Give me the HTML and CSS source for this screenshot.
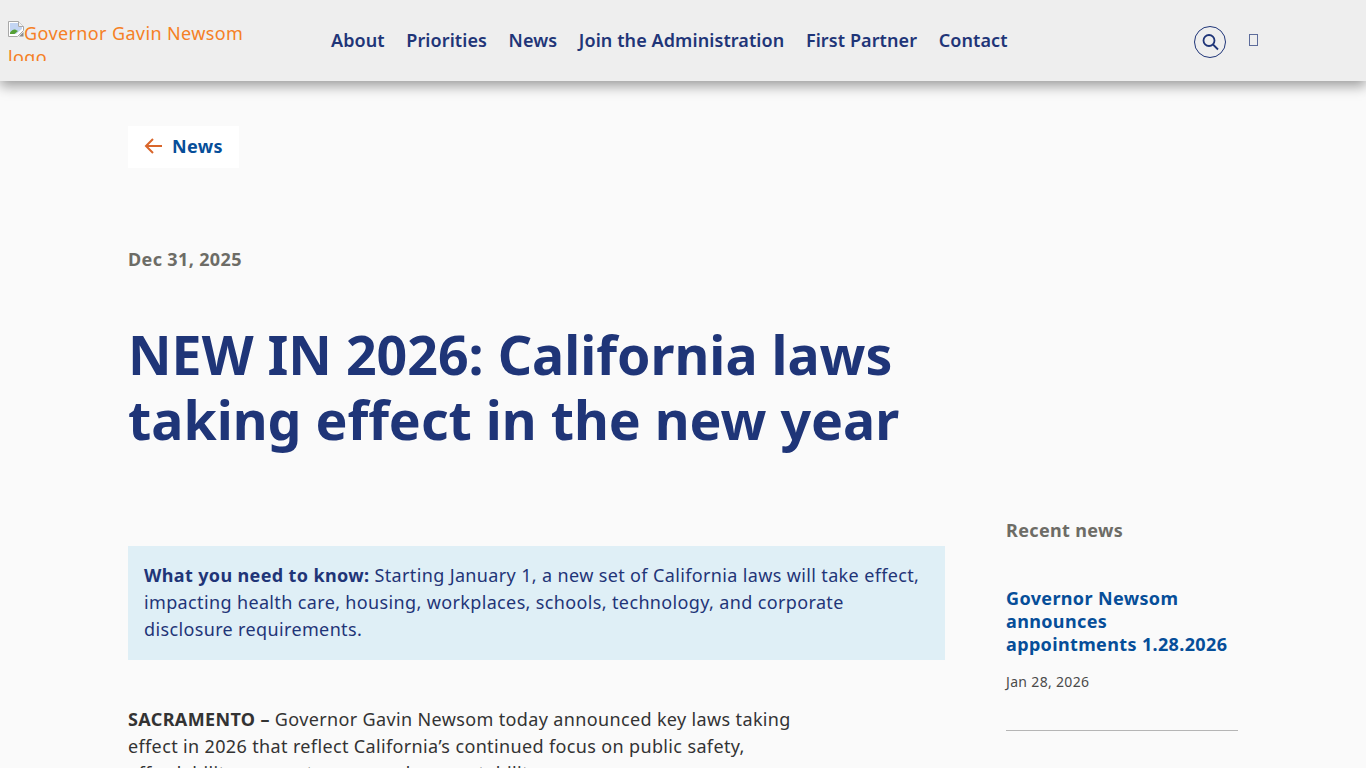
FILE: index.html
```html
<!DOCTYPE html>
<html lang="en">
<head>
    <meta charset="UTF-8">
    <meta name="viewport" content="width=device-width, initial-scale=1.0">
    <title>NEW IN 2026: California laws taking effect in the new year</title>
    <link rel="stylesheet" href="styles.css">
</head>
<body>
    <header class="site-header">
        <a class="logo" href="#">
            <svg class="broken-img" width="16" height="16" viewBox="0 0 16 16">
                <path d="M.5.5h10l5 5v4l-6 6H.5z" fill="#fff" stroke="#a8a8a8"/>
                <path d="M10.500.5v5h5" fill="#f2f2f2" stroke="#a8a8a8"/>
                <path d="M2 2h8v4h4v2l-6 5H2z" fill="#c3d5f3"/>
                <path d="M2 13v-1.500c2-2.500 4-3.500 6-2.500l2 1-3.500 3z" fill="#55a035"/>
                <path d="M11 15.500l4.500-4.500v4.500z" fill="#8a8a8a"/>
            </svg>Governor Gavin Newsom logo
        </a>
        <nav class="main-nav">
            <a href="#">About</a>
            <a href="#">Priorities</a>
            <a href="#">News</a>
            <a href="#">Join the Administration</a>
            <a href="#">First Partner</a>
            <a href="#">Contact</a>
        </nav>
        <div class="header-tools">
            <button class="search-btn" aria-label="Search">
                <svg width="18" height="18" viewBox="0 0 18 18" fill="none" stroke="#1f3578" stroke-width="1.800">
                    <circle cx="8" cy="7.500" r="5.500"/>
                    <path d="M12 11.500 17 16.500"/>
                </svg>
            </button>
            <span class="lang-box"></span>
        </div>
    </header>

    <main class="page">
        <a class="back-link" href="#">
            <svg width="18" height="18" viewBox="0 0 18 18" fill="none" stroke="#d9662b" stroke-width="2">
                <path d="M18 9H2M9 2 2 9l7 7"/>
            </svg>
            News
        </a>
        <p class="post-date">Dec 31, 2025</p>
        <h1 class="post-title">NEW IN 2026: California laws taking effect in the new year</h1>

        <div class="post-layout">
            <article class="post-body">
                <div class="callout">
                    <strong>What you need to know:</strong> Starting January 1, a new set of California laws will take effect, impacting health care, housing, workplaces, schools, technology, and corporate disclosure requirements.
                </div>
                <p class="lead"><strong>SACRAMENTO –</strong> Governor Gavin Newsom today announced key laws taking effect in 2026 that reflect California’s continued focus on public safety, affordability, access to care, and accountability.</p>
            </article>
            <aside class="sidebar">
                <h2 class="sidebar-title">Recent news</h2>
                <div class="recent-item">
                    <a href="#">Governor Newsom announces appointments 1.28.2026</a>
                    <p class="recent-date">Jan 28, 2026</p>
                </div>
            </aside>
        </div>
    </main>
</body>
</html>
```

FILE: styles.css
```css
html {
    overflow: hidden;
    height: 100%;
}

body {
    margin: 0;
    height: 100%;
    overflow: hidden;
    font-family: "Noto Sans", sans-serif;
    letter-spacing: 0.36px;
    background-color: #fafafa;
    color: #333;
}

a {
    text-decoration: none;
}

.site-header {
    height: 81px;
    display: flex;
    align-items: flex-start;
    background-color: #eeeeee;
    box-shadow: 0 5px 12px rgba(0, 0, 0, 0.38);
}

.logo {
    display: block;
    width: 240px;
    height: 40px;
    margin: 21px 0 0 8px;
    overflow: hidden;
    color: #f58025;
    font-size: 18px;
    letter-spacing: 0.38px;
    line-height: 23.500px;
}

.broken-img {
    vertical-align: 3px;
}

.main-nav {
    display: flex;
    gap: 21.600px;
    margin: 28px 0 0 83px;
}

.main-nav a {
    color: #1f3578;
    font-size: 18px;
    font-weight: 600;
    letter-spacing: 0.09px;
    line-height: 25px;
}

.header-tools {
    display: flex;
    align-items: flex-start;
    margin: 26px 0 0 auto;
    padding-right: 108px;
}

.search-btn {
    width: 32px;
    height: 32px;
    padding: 0;
    display: flex;
    align-items: center;
    justify-content: center;
    background: none;
    border: 1px solid #1f3578;
    border-radius: 50%;
}

.lang-box {
    width: 7px;
    height: 10px;
    margin: 8px 0 0 23px;
    border: 1px solid #1f3578;
    opacity: 0.7;
}

.page {
    padding: 45px 128px 0;
}

.back-link {
    display: inline-flex;
    align-items: center;
    gap: 10px;
    height: 40px;
    padding: 0 16px 2px;
    background-color: #fff;
    color: #064e99;
    font-size: 18px;
    font-weight: 700;
}

.post-date {
    margin: 79px 0 0;
    color: #6d6c66;
    font-size: 18px;
    font-weight: 700;
    line-height: 25px;
}

.post-title {
    margin: 50px 0 0;
    max-width: 800px;
    color: #1f3578;
    font-size: 53.650px;
    font-weight: 700;
    letter-spacing: 0;
    line-height: 65px;
}

.post-layout {
    display: flex;
    align-items: flex-start;
    margin-top: 64px;
}

.post-body {
    width: 817px;
    flex: none;
    padding-top: 30px;
}

.callout {
    height: 114px;
    box-sizing: border-box;
    padding: 16px;
    background-color: #dfeff6;
    color: #1f3578;
    font-size: 18px;
    line-height: 27px;
}

.lead {
    width: 680px;
    margin: 46px 0 0;
    font-size: 18px;
    line-height: 27px;
}

.sidebar {
    width: 232px;
    margin: 2px 0 0 61px;
}

.sidebar-title {
    margin: 0;
    color: #6d6c66;
    font-size: 18px;
    font-weight: 700;
    line-height: 25px;
}

.recent-item {
    margin-top: 44.400px;
    padding-bottom: 38px;
    border-bottom: 1px solid #b5b5b5;
}

.recent-item a {
    color: #064e99;
    font-size: 18px;
    font-weight: 700;
    line-height: 22.500px;
}

.recent-date {
    margin: 16px 0 0;
    color: #4a4a4a;
    font-size: 14px;
    letter-spacing: 0.33px;
    line-height: 20px;
}
```
